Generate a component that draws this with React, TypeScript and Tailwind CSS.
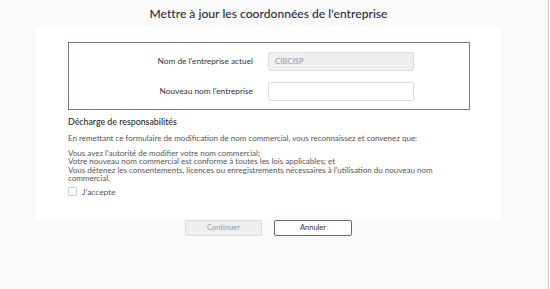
import type React from "react";

const font = { fontFamily: "Lato, 'Noto Sans', Arial, sans-serif" };

const App: React.FC = () => {
  return (
    <div className="w-[550px] h-[289px] flex bg-[#f9f9f9] text-[#333]" style={font}>
      <div className="flex-1 flex flex-col pl-[36px] pr-[47px]">
        {/* Title */}
        <div className="h-[27px] flex items-center justify-center">
          <h1 className="text-[12px] font-medium text-[#1e2b3c] tracking-[0.05px]">
            Mettre à jour les coordonnées de l'entreprise
          </h1>
        </div>

        {/* Main panel */}
        <div className="bg-white h-[192px] pt-[15px] pl-[32px] pr-[31px]">
          <div className="border border-[#6c7a8a] h-[68px] flex flex-col gap-[11px] pt-[9px]">
            <div className="flex items-center h-[19px]">
              <label className="w-[184px] text-right text-[8.3px] text-[#333]">
                Nom de l'entreprise actuel
              </label>
              <div className="ml-[15px] w-[146px] h-[19px] bg-[#efefef] border border-[#dedede] rounded-[2px] flex items-center px-[6px] text-[7.8px] text-[#9a9a9a]">
                CIBCISP
              </div>
            </div>
            <div className="flex items-center h-[19px]">
              <label className="w-[184px] text-right text-[8.3px] text-[#333]">
                Nouveau nom l'entreprise
              </label>
              <input
                type="text"
                className="ml-[15px] w-[146px] h-[19px] bg-white border border-[#dedede] rounded-[2px] outline-none"
              />
            </div>
          </div>

          {/* Disclaimer */}
          <div className="text-[8px] leading-[9.6px] text-[#555]">
            <h2 className="mt-[7px] text-[8.8px] leading-[10px] font-medium text-[#2a2a2a]">
              Décharge de responsabilités
            </h2>
            <p className="mt-[7px]">
              En remettant ce formulaire de modification de nom commercial, vous reconnaissez et convenez que:
            </p>
            <p className="mt-[5px] leading-[8.5px]">
              Vous avez l'autorité de modifier votre nom commercial;
              <br />
              Votre nouveau nom commercial est conforme à toutes les lois applicables; et
              <br />
              Vous détenez les consentements, licences ou enregistrements nécessaires à l'utilisation du nouveau nom
              <br />
              commercial.
            </p>
            <label className="mt-[4px] flex items-center gap-[5px]">
              <span className="w-[9px] h-[9px] border border-[#cfcfcf] rounded-[1px] bg-white" />
              <span className="text-[8.4px] leading-[10px] text-[#555]">J'accepte</span>
            </label>
          </div>
        </div>

        {/* Actions */}
        <div className="mt-px flex justify-center gap-[12px]">
          <button
            type="button"
            className="w-[77px] h-[16px] bg-[#efefef] border border-[#dcdcdc] rounded-[2px] text-[7.5px] text-[#9a9a9a]"
          >
            Continuer
          </button>
          <button
            type="button"
            className="w-[78px] h-[16px] bg-white border border-[#5f6d7c] rounded-[2px] text-[7.5px] text-[#333]"
          >
            Annuler
          </button>
        </div>
      </div>
      <div className="w-px bg-[#cfcfcf]" />
      <div className="w-px bg-white" />
    </div>
  );
};

export default App;
